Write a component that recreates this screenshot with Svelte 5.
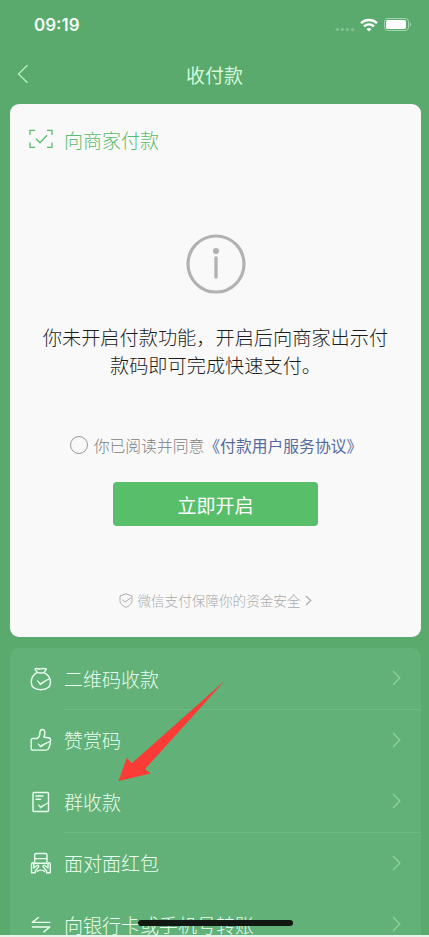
<script lang="ts">
  const rows = [
    { icon: 'bag', label: '二维码收款', line: true },
    { icon: 'thumb', label: '赞赏码', line: false },
    { icon: 'bill', label: '群收款', line: true },
    { icon: 'packet', label: '面对面红包', line: false },
    { icon: 'transfer', label: '向银行卡或手机号转账', line: false },
  ];
</script>

<div class="screen">
  <div class="status">
    <span class="time">09:19</span>
    <div class="signals">
      <svg class="dots" width="20" height="5" viewBox="0 0 20 5">
        <circle cx="2.2" cy="2.5" r="1.7" /><circle cx="7.3" cy="2.5" r="1.7" />
        <circle cx="12.4" cy="2.5" r="1.7" /><circle cx="17.5" cy="2.5" r="1.7" />
      </svg>
      <svg class="wifi" width="18" height="14" viewBox="0 0 18 14" fill="none" stroke="#fff" stroke-width="2.4">
        <path d="M1 5.1C5.5.9 12.5.9 17 5.1" />
        <path d="M4 8.4c2.9-2.6 7.1-2.6 10 0" />
        <path d="M9 13.4 6.5 10.9c1.4-1.2 3.6-1.2 5 0z" fill="#fff" stroke="none" />
      </svg>
      <svg class="battery" width="28" height="13" viewBox="0 0 28 13">
        <rect x=".5" y=".5" width="24" height="12" rx="3.3" fill="none" stroke="#a5d6b2" />
        <rect x="2" y="2" width="20" height="9" rx="1.8" fill="#fff" />
        <path d="M26 4.5c1.6.6 1.6 3.4 0 4z" fill="#a5d6b2" />
      </svg>
    </div>
  </div>

  <header class="nav">
    <svg class="back" width="12" height="20" viewBox="0 0 12 20" fill="none">
      <path d="M10.5 1.2 1.5 10l9 8.8" stroke="#b4efc2" stroke-width="1.4" />
    </svg>
    <h1>收付款</h1>
  </header>

  <section class="card">
    <div class="card-head">
      <svg width="24" height="20" viewBox="0 0 24 20" fill="none" stroke="#59bb6d" stroke-width="1.3">
        <path d="M1 6V1.3h5M18 1.3h5V6M1 13.5v4.8h5M18 18.3h5v-4.8M7 9.7l4 4 7-7.4" />
      </svg>
      <span>向商家付款</span>
    </div>
    <svg class="info" width="60" height="60" viewBox="0 0 60 60">
      <circle cx="30" cy="30" r="28" fill="none" stroke="#b2b2b2" stroke-width="3.2" />
      <circle cx="30" cy="17" r="3.1" fill="#b2b2b2" />
      <path d="M30 24v19" stroke="#b2b2b2" stroke-width="3.4" stroke-linecap="round" />
    </svg>
    <p class="message">你未开启付款功能，开启后向商家出示付款码即可完成快速支付。</p>
    <div class="agree">
      <span class="radio"></span>
      <span>你已阅读并同意</span><span class="link">《付款用户服务协议》</span>
    </div>
    <button class="open">立即开启</button>
    <div class="safe">
      <svg width="14" height="15" viewBox="0 0 14 15" fill="none" stroke="#aaa" stroke-width="1">
        <path d="M7 .8 13 3v4.5c0 3-2.3 5.3-6 6.8-3.700-1.500-6-3.800-6-6.800V3z" />
        <path d="m3.300 6.800 2.700 2.200 6-4.300" />
      </svg>
      <span>微信支付保障你的资金安全</span>
      <svg class="more" width="7" height="11" viewBox="0 0 7 11" fill="none" stroke="#aaa" stroke-width="1.200">
        <path d="m1 1 4.800 4.500L1 10" />
      </svg>
    </div>
  </section>

  <section class="list">
    {#each rows as row}
      <div class="row">
        <svg class="icon" width="22" height="24" viewBox="0 0 22 24" fill="none" stroke="#eafff0" stroke-width="1.400" stroke-linejoin="round" stroke-linecap="round">
          {#if row.icon === 'bag'}
            <path d="M7.300 5.400 5 1.800c2-.9 3.200.5 5 .2 2-.4 4-1 6.400.2L14 5.600M7.300 5.400c2 .8 4.500.8 6.700.2M7.300 5.400C3.500 7.500 1.200 11.300 1.200 15c0 5 3.800 7.700 9.600 7.700S20.500 20 20.500 15c0-3.800-2.500-7.400-6.500-9.400" />
            <path d="m7.500 13.700 3 2.600 9.300-5-9.300 6.500z" fill="#eafff0" stroke-width=".8" />
          {:else if row.icon === 'thumb'}
            <path d="M2.700 10.500h4.500c1.700-1 2.700-3 2.700-5.500 0-4.600 4.600-4.600 4.900-.8.100 2-.3 3.500-.8 5.100 3.500 0 6.600 0 6.600 2.500 0 3-.8 6-1.700 8.300-.6 1.600-1.300 2-3 2H2.700c-1 0-1.500-.5-1.500-1.500V12c0-1 .5-1.500 1.500-1.500z" />
            <path d="m8.300 16 2.200 1.600 9.400-4.300-9.200 5.700z" fill="#eafff0" stroke-width=".8" />
          {:else if row.icon === 'bill'}
            <rect x="3" y="2.500" width="15.500" height="19" rx="1" />
            <path d="M6 6h7M6 9.300h4.500" />
            <path d="m8.500 14.800 2.300 1.700 7.200-3.700-7.200 5.200z" fill="#eafff0" stroke-width=".7" />
          {:else if row.icon === 'packet'}
            <path d="M4.700 11V4c0-1 .4-1.500 1.400-1.500h9.500c1 0 1.400.5 1.400 1.500v7M5 7.600h12M5 12.300h12M1.500 21.700v-8.500c0-1.800 2-2 2.300-.4v4.200l3-2.500c1.300-1 2.500.4 1.700 1.500l-3.300 4v1.700zM20.300 21.700v-8.500c0-1.800-2-2-2.300-.4v4.200l-3-2.500c-1.300-1-2.500.4-1.700 1.500l3.300 4v1.700z" />
            <path d="M7.200 20.500c1.500-1.800 5.800-1.800 7.300 0" />
          {:else}
            <path d="M19.800 9.400H2.300l6-4.900M2.300 14h17.500l-6 4.900" />
          {/if}
        </svg>
        <div class="body" class:line={row.line}>
          <span>{row.label}</span>
          <svg width="9" height="16" viewBox="0 0 9 16" fill="none" stroke="#8fd0a1" stroke-width="1.300">
            <path d="m1 1 6.800 7L1 15" />
          </svg>
        </div>
      </div>
    {/each}
  </section>

  <svg class="arrow" width="108" height="104" viewBox="0 0 108 104">
    <path d="M107 .5 27 89l5.500 4.500L.5 101 8.800 77.800l5 5.500z" fill="#fc3a36" />
  </svg>
  <div class="home"></div>
</div>

<style>
  :global(body) {
    background: #e6f5ea;
  }

  .screen {
    position: relative;
    width: 429px;
    height: 935px;
    overflow: hidden;
    background: #59aa6c;
    font-family: 'Noto Sans CJK SC', sans-serif;
    font-weight: 300;
  }

  .status {
    display: flex;
    justify-content: space-between;
    height: 50px;
    padding: 0 17px 0 34px;
    box-sizing: border-box;
  }

  .time {
    font: 600 17px/50px Inter, sans-serif;
    color: #f4fff6;
  }

  .signals {
    display: flex;
    align-items: center;
    height: 49px;
  }

  .dots {
    margin: 9px 5px 0 0;
    fill: #7fc08f;
  }

  .wifi {
    margin-right: 6px;
  }

  .nav {
    display: grid;
    grid-template-columns: 40px 1fr 40px;
    align-items: center;
    height: 48px;
  }

  .back {
    margin-left: 17px;
  }

  h1 {
    margin: 0;
    font-size: 19px;
    font-weight: 400;
    text-align: center;
    color: #d3f8dc;
  }

  .card {
    display: flex;
    flex-direction: column;
    align-items: center;
    height: 533px;
    margin: 6px 8px 0 10px;
    border-radius: 9px;
    background: #f9f9f9;
  }

  .card-head {
    display: flex;
    align-items: center;
    align-self: stretch;
    gap: 11px;
    height: 70px;
    padding-left: 19px;
    font-size: 19px;
    color: #59bb6d;
  }

  .info {
    margin-top: 60px;
  }

  .message {
    width: 346px;
    margin: 29px 0 0;
    font-size: 19.2px;
    line-height: 28px;
    text-align: center;
    color: #1c1c1c;
  }

  .agree {
    display: flex;
    align-items: center;
    height: 24px;
    margin-top: 54px;
    padding-left: 1px;
    font-size: 15.800px;
    color: #808080;
  }

  .radio {
    width: 16px;
    height: 16px;
    margin-right: 6px;
    border: 1px solid #999;
    border-radius: 50%;
  }

  .link {
    font-weight: 400;
    color: #566a9b;
  }

  .open {
    width: 205px;
    height: 44px;
    margin-top: 25px;
    padding: 0;
    border: 0;
    border-radius: 4px;
    background: #58be6a;
    font: 400 19px 'Noto Sans CJK SC', sans-serif;
    color: #fff;
  }

  .safe {
    display: flex;
    align-items: center;
    height: 20px;
    margin-top: 64px;
    font-size: 13.600px;
    color: #aaa;
  }

  .safe span {
    margin: 0 4px;
  }

  .list {
    height: 300px;
    margin: 11px 8px 0 10px;
    border-radius: 9px 9px 0 0;
    background: #61b178;
  }

  .row {
    display: flex;
    align-items: center;
    height: 61.500px;
    padding-left: 20px;
  }

  .icon {
    margin-right: 12px;
  }

  .body {
    display: flex;
    flex: 1;
    align-items: center;
    justify-content: space-between;
    height: 100%;
    padding-right: 20px;
    border-bottom: 1px solid transparent;
    box-sizing: border-box;
    font-size: 19px;
    color: #eafff0;
  }

  .line {
    border-color: #6dbb83;
  }

  .arrow {
    position: absolute;
    left: 118px;
    top: 680px;
  }

  .home {
    position: absolute;
    left: 138px;
    top: 920px;
    width: 155px;
    height: 6px;
    border-radius: 3px;
    background: #111713;
  }
</style>
